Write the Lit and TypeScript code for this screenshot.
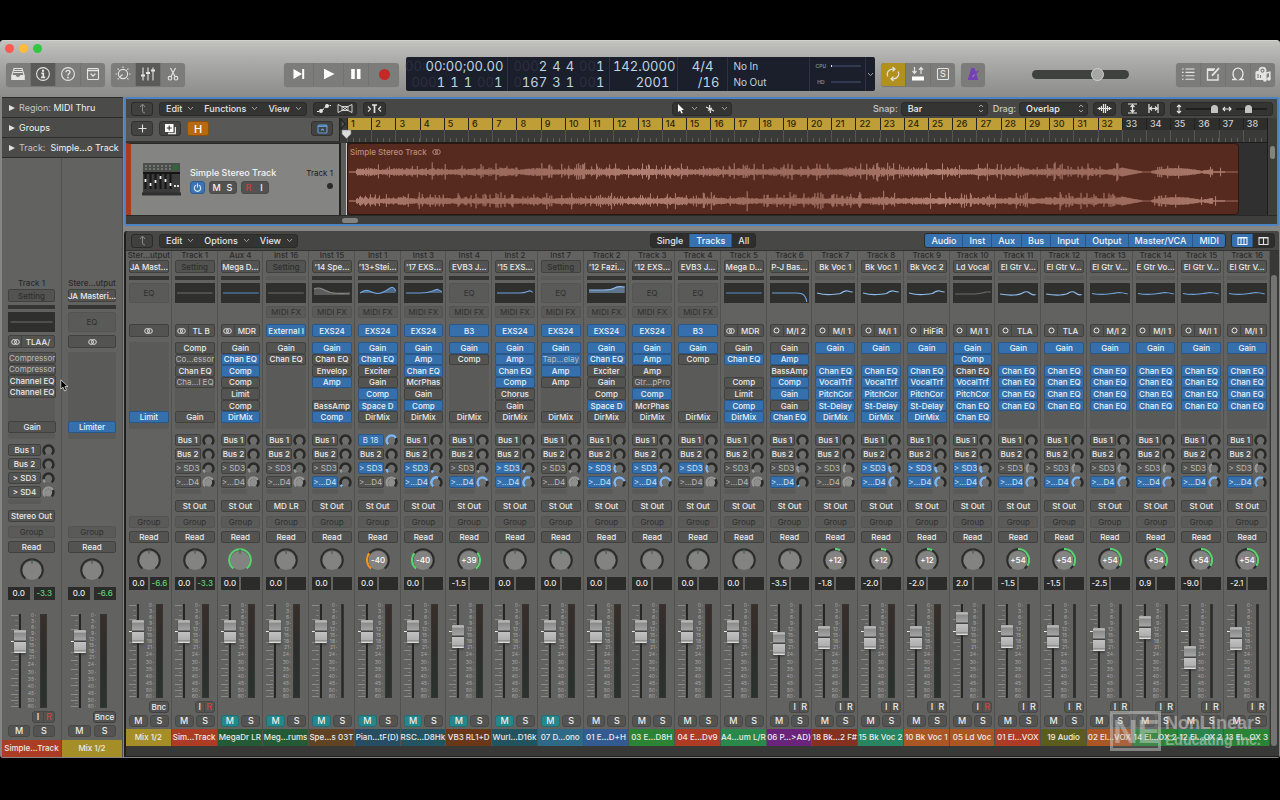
import { LitElement, html, css, svg, nothing } from "lit";
import { customElement, property } from "lit/decorators.js";
import { classMap } from "lit/directives/class-map.js";
import { styleMap } from "lit/directives/style-map.js";

interface Strip {
  top: string;
  set: string;
  bar?: "dark" | "pale";
  eq: string;
  midi?: boolean;
  inst?: string;
  input?: [string, string];
  fx: string[];
  sends?: [string, string, number][];
  out?: string;
  pan?: number;
  panColor?: string;
  vol: string;
  peak?: string;
  fader: number;
  mono?: boolean;
  io?: string;
  mute?: boolean;
  name: string;
  color: string;
}

const base = css`
  * { box-sizing: border-box; }
  button, select, input { margin: 0; padding: 0; border: 0; font: inherit; color: inherit; background: none; border-radius: 0; }
  button { display: flex; align-items: center; justify-content: center; white-space: nowrap; }
  svg { display: block; }
`;

const point = (cx: number, cy: number, r: number, deg: number) => {
  const a = ((deg - 90) * Math.PI) / 180;
  return `${(cx + r * Math.cos(a)).toFixed(2)} ${(cy + r * Math.sin(a)).toFixed(2)}`;
};
const arc = (c: number, r: number, from: number, to: number) =>
  `M${point(c, c, r, from)}A${r} ${r} 0 ${to - from > 180 ? 1 : 0} 1 ${point(c, c, r, to)}`;

const stereoIcon = svg`<svg width="9" height="6" viewBox="0 0 9 6" fill="none" stroke="currentColor" stroke-width="0.9"><circle cx="3.1" cy="3" r="2.4"/><circle cx="5.9" cy="3" r="2.4"/></svg>`;
const monoIcon = svg`<svg width="7" height="7" viewBox="0 0 7 7" fill="none" stroke="currentColor" stroke-width="1"><circle cx="3.5" cy="3.5" r="2.5"/></svg>`;

const curves: Record<string, [string, string, string?]> = {
  flat: ["M2 10H37", "#6f6f6f"],
  blueflat: ["M2 10H37", "#5b8fca"],
  grayhump: ["M2 6Q6 4 10 6T18 9.5Q27 11 37 10", "#8a8a8a", "V12H2Z"],
  wave: ["M2 10Q7 6 11 8T19 10.5Q25 10 30 6T37 8", "#6fa3dc", "V10H2Z"],
  rise: ["M2 10H16Q23 10 28 8T33 6.5Q35 7 37 9", "#6fa3dc", "V10H2Z"],
  bump: ["M2 10H24Q29 10 32 8.5T37 9.5", "#6fa3dc"],
  shelf: ["M2 7H16Q24 7 27 5T37 4", "#8fbcec", "V10H2Z"],
  lowcut: ["M2 10H26Q32 10 34 13T36 19", "#6fa3dc"],
  vox: ["M2 10Q9 12 16 11.5T25 10.5Q29 7 32 8T37 9", "#8fbcec"],
  grayvox: ["M2 11H22Q30 10 32 9H37", "#6c6c6c"],
  gtr: ["M2 11Q10 12.5 16 12T24 10Q28 7.5 31 10T37 11.5", "#8fbcec"],
  gtr2: ["M2 10.5Q10 12 18 11T28 9.5Q32 9.5 37 11", "#6fa3dc"],
};

const scale: [string, number][] = [["0", 1], ["3", 7], ["6", 13], ["9", 19], ["12", 25], ["15", 31], ["18", 37], ["21", 43], ["24", 50], ["30", 58], ["35", 65], ["40", 72], ["45", 79], ["50", 86], ["60", 92]];
const majorTicks = [1, 15, 27, 38, 46, 55, 64, 71, 80, 86, 92];
const minorTicks = [6, 11, 19, 23, 31, 35, 42, 50, 60, 68, 76, 83, 89];

@customElement("channel-strip")
export class ChannelStrip extends LitElement {
  @property({ attribute: false }) strip!: Strip;
  @property({ type: Boolean, reflect: true }) wide = false;

  static styles = [base, css`
    :host { display: flex; flex-direction: column; min-width: 0; background: #626261; border-right: 1px solid #515150; font-size: 8px; line-height: 8px; font-weight: 500; color: #ebebea; }
    .body { padding: 0 2px 0 3px; display: flex; flex-direction: column; }
    :host([wide]) .body { padding: 0 6px; }
    .label { height: 9px; margin: 0 -3px; text-align: center; color: #2b2b2b; white-space: nowrap; }
    :host([wide]) .label { margin-bottom: 1px; }
    .btn { width: 100%; height: 12px; background: #535352; border: 1px solid #414140; border-radius: 2px; }
    .setting { height: 13px; }
    .off { color: #2f2f2f; }
    .pale { background: #5a5a59; border-color: #545453; color: #303030; font-weight: 400; }
    .bar { height: 4px; margin: 3px 0; background: #353534; }
    .bar.light { background: #5a5a59; }
    .eq { height: 20px; background: #2f2f2e; width: 100%; }
    .eqbox { height: 20px; }
    .midi { margin-top: 3px; }
    .gap { height: 15px; }
    :host([wide]) .gap { height: 0; }
    .source { height: 13px; margin: 6px 0 5px; display: flex; overflow: hidden; }
    :host([wide]) .source { margin: 3px 0 4px; }
    .source .icon { width: 13px; flex: none; height: 11px; border-right: 1px solid #434342; }
    .source .only { width: 100%; height: 11px; }
    .source .what { flex: 1; height: 11px; }
    .on { background: #3570ac; border-color: #29578a; color: #eaf2fa; }
    .fx { display: grid; grid-template-rows: repeat(7, minmax(0, 1fr)); height: 87px; padding-bottom: 6px; background: #5a5a59; border-radius: 2px; margin-bottom: 5px; }
    .fx .btn { height: auto; }
    .dim { color: #bcbcbb; font-weight: 400; }
    .sends { display: grid; grid-template-rows: repeat(4, 12px); gap: 2px; height: 54px; }
    .send { display: flex; align-items: center; gap: 1px; }
    .send .btn { flex: 1; min-width: 0; }
    .send .btn.on { color: #d3e3f3; font-weight: 400; }
    .send svg { flex: none; }
    .empty { width: 26px; height: 5px; margin: 1px 0 6px; background: #5a5a59; border-radius: 2px; }
    :host([wide]) .empty { width: 33px; }
    .group { margin: 4px 0 3px; }
    .knob { align-self: center; margin: 5px 0; }
    .knob text { font: 500 8px Inter, sans-serif; fill: #fff; text-anchor: middle; }
    .vals { display: flex; gap: 2px; height: 13px; }
    :host([wide]) .vals { gap: 4px; }
    .vals output { flex: 1 1 0; background: #2b2b2a; text-align: center; line-height: 13px; color: #e8e8e8; }
    .vals .peak { color: #61d276; }
    .fader { display: flex; height: 94px; margin: 14px 0 3px; }
    :host([wide]) .fader { padding-left: 3px; }
    .travel { display: grid; width: 15px; }
    .travel > * { grid-area: 1 / 1; }
    .travel input { -webkit-appearance: none; appearance: none; writing-mode: vertical-lr; direction: rtl; width: 15px; height: 94px; padding-left: 3px; }
    .travel input::-webkit-slider-runnable-track { width: 12px; height: 94px; background: linear-gradient(90deg, transparent 5px, #262626 5px, #262626 7px, transparent 7px); }
    .travel input::-webkit-slider-thumb { -webkit-appearance: none; width: 12px; height: 23px; border-radius: 1px; box-shadow: 0 2px 2px #3338; background: linear-gradient(#a8a8a8 0, #bcbcbc 2px, #8a8a8a 3px, #a4a4a4 10px, #444 11px, #444 12px, #c2c2c2 12px, #aeaeae 20px, #777 21px, #ddd 22px); }
    .scale text { font: 400 5px Inter, sans-serif; fill: #a9a9a8; text-anchor: end; }
    .meter { width: 7px; height: 94px; margin-left: 2px; background: linear-gradient(#3a2e29, #2d2d2a 45%, #2b332e); border: 1px solid #353535; }
    .mono .meter { width: 3px; margin-left: 4px; background: #262b28; }
    :host([wide]) .meter { margin-left: 4px; }
    .io { display: flex; height: 12px; margin-bottom: 2px; justify-content: flex-end; }
    .io .pair { display: flex; border: 1px solid #484847; border-radius: 3px; background: #535352; width: 20px; }
    .io .pair button { flex: 1; font-size: 9px; }
    .io .pair button + button { border-left: 1px solid #454544; }
    .io .bounce { width: 20px; padding: 0 1px; border-radius: 3px; }
    :host([wide]) .io .pair { width: 23px; }
    :host([wide]) .io .bounce { width: 23px; }
    .io .pair .rec { color: #d2423c; }
    .ms { display: flex; gap: 2px; height: 12px; margin-bottom: 2px; }
    :host([wide]) .ms { margin-bottom: 3px; gap: 3px; }
    .ms .btn { border-radius: 3px; border-color: #484847; font-size: 9px; }
    .ms .muted { background: #25878b; border-color: #1f6f73; }
    .name { height: 17px; line-height: 17px; text-align: center; white-space: nowrap; }
    .hidden { visibility: hidden; }
  `];

  private eq(kind: string) {
    if (kind === "none") return html`<button class="btn pale eqbox">EQ</button>`;
    const [d, color, close] = curves[kind];
    return html`<svg class="eq" viewBox="0 0 39 20" preserveAspectRatio="none" role="img" aria-label="EQ curve">
      ${close ? svg`<path d=${d + close} fill=${color} fill-opacity="0.5"/>` : nothing}
      <path d=${d} fill="none" stroke=${color} stroke-width="1.2" /></svg>`;
  }

  private source(s: Strip) {
    if (s.inst) return html`<button class="btn on source">${s.inst}</button>`;
    const [kind, what] = s.input!;
    const icon = kind === "s" ? stereoIcon : monoIcon;
    if (!what) return html`<div class="btn source"><button class="only" aria-label="Format">${icon}</button></div>`;
    return html`<div class="btn source"><button class="icon" aria-label="Format">${icon}</button><button class="what">${what}</button></div>`;
  }

  private sendKnob(mode: string, to: number) {
    const color = mode === "on" ? "#7fb6f2" : "#979797";
    return svg`<svg width="13" height="13" viewBox="0 0 13 13" fill="none" stroke-width="2.6">
      <circle cx="6.5" cy="6.5" r="4" fill=${mode !== "on" && to > 40 ? "#8e8e8d" : "#6e6e6d"}/>
      <path d=${arc(6.5, 5, -140, 140)} stroke="#2a2a29"/>
      ${to > -140 ? svg`<path d=${arc(6.5, 5, -140, to)} stroke=${color}/>` : nothing}</svg>`;
  }

  private panKnob(s: Strip) {
    const p = s.pan ?? 0;
    const full = p === 99;
    const c = s.panColor ?? "#59d36f";
    const lit = p < 0 ? arc(12, 11, -142, -52) : p > 50 ? arc(12, 11, 0, 122) : p > 30 ? arc(12, 11, 48, 142) : arc(12, 11, 0, 28);
    return svg`<svg class="knob" width="24" height="24" viewBox="0 0 24 24" fill="none">
      <circle cx="12" cy="12.5" r="9.6" fill="#838382"/>
      <path d=${arc(12, 10.8, -142, 142)} stroke=${full ? c : "#2c2c2b"} stroke-width="2"/>
      ${p && !full ? svg`<path d=${lit} stroke=${c} stroke-width="2.2"/>`
        : svg`<path d="M12 1V6" stroke="#3a5a40" stroke-width="1"/>`}
      ${p && !full ? svg`<text x="12" y="14.5">${p > 0 ? "+" + p : p}</text>` : nothing}</svg>`;
  }

  render() {
    const s = this.strip;
    return html`
      <div class="body">
        <div class="label">${s.top}</div>
        <button class=${classMap({ btn: true, setting: true, off: s.set === "Setting" })}>${s.set}</button>
        <div class=${classMap({ bar: true, light: s.bar === "pale" })}></div>
        ${this.eq(s.eq)}
        ${s.midi ? html`<button class="btn pale midi">MIDI FX</button>` : html`<div class="gap"></div>`}
        ${this.source(s)}
        <div class="fx">${s.fx.map((f) => f
          ? html`<button class=${classMap({ btn: true, on: f.includes("*"), dim: f.includes("~") })}>${f.replace(/[*~]/g, "")}</button>`
          : html`<span></span>`)}</div>
        <div class="sends">${(s.sends ?? []).map(([t, m, to]) => html`<div class="send">
          <button class=${classMap({ btn: true, on: m === "on", dim: m === "dim" })}>${t}</button>${this.sendKnob(m, to)}</div>`)}</div>
        <div class=${classMap({ empty: true, hidden: !s.sends })}></div>
        ${s.out ? html`<button class="btn">${s.out}</button>` : html`<button class="btn hidden" disabled></button>`}
        <button class="btn pale group">Group</button>
        <button class="btn">Read</button>
        ${this.panKnob(s)}
        <div class="vals"><output>${s.vol}</output><output class="peak">${s.peak ?? ""}</output></div>
        <div class=${classMap({ fader: true, mono: !!s.mono })}>
          <div class="travel">
            <svg width="8" height="94" viewBox="0 0 8 94" stroke-width="1">
              ${majorTicks.map((y) => svg`<path d="M0 ${y + 0.5}H7" stroke=${y === 27 ? "#f0f0f0" : "#8a8a89"}/>`)}
              ${minorTicks.map((y) => svg`<path d="M4 ${y + 0.5}H7" stroke="#7c7c7b"/>`)}
            </svg>
            <input type="range" min="0" max="71" .value=${String(55 - s.fader)} aria-label="Volume ${s.name}" />
          </div>
          <svg class="scale" width="10" height="94" viewBox="0 0 10 94" overflow="visible">
            ${scale.map(([t, y]) => svg`<text x="8" y=${y + 2}>${t}</text><path d="M9 ${y + 0.5}H10" stroke="#8c8c8b" stroke-width="0.7"/>`)}
          </svg>
          <div class="meter"></div>
        </div>
        <div class="io">${!s.io ? nothing : s.io.startsWith("B")
          ? html`<button class="btn bounce">${s.io}</button>`
          : html`<div class="pair"><button>I</button><button class=${classMap({ rec: s.io === "IR!" })}>R</button></div>`}</div>
        <div class="ms"><button class=${classMap({ btn: true, muted: !!s.mute })}>M</button><button class="btn">S</button></div>
      </div>
      <div class="name" style=${styleMap({ background: s.color })}>${s.name}</div>`;
  }
}

const N = -140;
const sends = (a: string, at: number, b: string, bt: number): [string, string, number][] => [
  ["Bus 1", "", N], ["Bus 2", "", N], ["> SD3", a, at], [">…D4", b, bt],
];
const d = "dim", o = "on";

const inspectorStrips: Strip[] = [
  { top: "Track 1", set: "Setting", eq: "flat", input: ["s", "TLAA/"], fx: ["~Compressor", "~Compressor", "Channel EQ", "Channel EQ", "", "", "Gain"], sends: [["Bus 1", "", N], ["Bus 2", "", N], ["> SD3", "", -100], ["> SD4", "", 60]], out: "Stereo Out", vol: "0.0", peak: "-3.3", fader: 0, io: "IR!", name: "Simple…Track", color: "#ac3c23" },
  { top: "Stere…utput", set: "JA Masteri…", eq: "none", input: ["s", ""], fx: ["", "", "", "", "", "", "*Limiter"], vol: "0.0", peak: "-6.6", fader: 0, io: "Bnce", name: "Mix 1/2", color: "#a58e28" },
];

const voc = ["*Gain", "", "*Chan EQ", "*VocalTrf", "*PitchCor", "*St-Delay", "*DirMix"];
const gtr = ["*Gain", "", "*Chan EQ", "*Chan EQ", "*Chan EQ", "*Chan EQ", ""];
const guitar = (n: number, set: string, eq: string, src: string, vol: string, fader: number, name: string, color: string): Strip => ({
  top: `Track ${n}`, set, bar: "pale", eq, input: ["m", src], fx: gtr, sends: sends(d, -30, o, 30), out: "St Out", pan: 54, vol, fader, mono: true, io: "IR", name, color,
});

const strips: Strip[] = [
  { top: "Ster…utput", set: "JA Mast…", eq: "none", input: ["s", ""], fx: ["", "", "", "", "", "", "*Limit"], vol: "0.0", peak: "-6.6", fader: 0, io: "Bnc", name: "Mix 1/2", color: "#a58e28" },
  { top: "Track 1", set: "Setting", eq: "flat", input: ["s", "TL B"], fx: ["Comp", "~Co…essor", "Chan EQ", "~Cha…l EQ", "", "", "Gain"], sends: sends(d, -100, d, 60), out: "St Out", vol: "0.0", peak: "-3.3", fader: 0, io: "IR!", name: "Sim…Track", color: "#ac3c23" },
  { top: "Aux 4", set: "Mega D…", eq: "blueflat", input: ["s", "MDR"], fx: ["Gain", "*Chan EQ", "*Comp", "Comp", "Limit", "Comp", "*DirMix"], sends: sends(d, -90, d, 60), out: "St Out", pan: 99, vol: "0.0", fader: 0, mute: true, name: "MegaDr LR", color: "#245a36" },
  { top: "Inst 16", set: "Setting", bar: "pale", eq: "flat", midi: true, inst: "External I", fx: ["Gain", "Chan EQ", "", "", "", "", ""], sends: sends(d, -100, d, 60), out: "MD LR", vol: "0.0", fader: 0, mute: true, name: "Meg…rums", color: "#245a36" },
  { top: "Inst 15", set: "’14 Spe…", eq: "grayhump", midi: true, inst: "EXS24", fx: ["*Gain", "Chan EQ", "Envelop", "*Amp", "", "BassAmp", "*Comp"], sends: sends(d, -100, o, -115), out: "St Out", vol: "0.0", fader: 0, mono: true, mute: true, name: "Spe…s 03T", color: "#5f4322" },
  { top: "Inst 1", set: "’13+Stei…", eq: "wave", midi: true, inst: "EXS24", fx: ["*Gain", "*Chan EQ", "Exciter", "Gain", "*Comp", "*Space D", "DirMix"], sends: [["B 18", o, 60], ["Bus 2", "", N], ["> SD3", o, -95], [">…D4", d, 50]], out: "St Out", pan: -40, panColor: "#f39325", vol: "0.0", fader: 0, mute: true, name: "Pian…tF(D)", color: "#264d62" },
  { top: "Inst 3", set: "’17 EXS…", eq: "rise", midi: true, inst: "EXS24", fx: ["*Gain", "*Amp", "*Chan EQ", "McrPhas", "Gain", "*Comp", "DirMix"], sends: sends(o, -110, o, 20), out: "St Out", pan: -40, vol: "0.0", fader: 0, mute: true, name: "RSC…D8Hk", color: "#245362" },
  { top: "Inst 4", set: "EVB3 J…", eq: "none", midi: true, inst: "B3", fx: ["*Gain", "Comp", "", "", "", "", "DirMix"], sends: sends(d, -110, o, 70), out: "St Out", pan: 39, vol: "-1.5", fader: 5, mute: true, name: "VB3 RL1+D", color: "#6a3719" },
  { top: "Inst 2", set: "’15 EXS…", eq: "bump", midi: true, inst: "EXS24", fx: ["*Gain", "*Amp", "*Chan EQ", "*Comp", "Chorus", "Gain", "DirMix"], sends: sends(o, -105, o, 20), out: "St Out", vol: "0.0", fader: 0, mute: true, name: "Wurl…D16k", color: "#245360" },
  { top: "Inst 7", set: "Setting", bar: "pale", eq: "none", midi: true, inst: "EXS24", fx: ["*Gain", "*~Tap…elay", "*Amp", "Amp", "", "", "DirMix"], sends: sends(d, -110, d, 60), out: "St Out", vol: "0.0", fader: 0, mute: true, name: "07 D…ono", color: "#2e6987" },
  { top: "Track 2", set: "’12 Fazi…", eq: "shelf", midi: true, inst: "EXS24", fx: ["*Gain", "*Chan EQ", "Exciter", "Gain", "Comp", "*Space D", "DirMix"], sends: sends(o, -50, o, 75), out: "St Out", vol: "0.0", fader: 0, name: "01 E…D+H", color: "#345b91" },
  { top: "Track 3", set: "’12 EXS…", eq: "none", midi: true, inst: "EXS24", fx: ["*Gain", "*Amp", "Amp", "~Gtr…pPro", "*Comp", "McrPhas", "DirMix"], sends: sends(o, -95, o, 75), out: "St Out", vol: "0.0", fader: 0, name: "03 E…D8H", color: "#2b8434" },
  { top: "Track 4", set: "EVB3 J…", eq: "none", midi: true, inst: "B3", fx: ["*Gain", "Comp", "", "", "", "", "DirMix"], sends: sends(o, -50, d, 50), out: "St Out", vol: "0.0", fader: 0, name: "04 E…Dv9", color: "#ac3c23" },
  { top: "Track 5", set: "Mega D…", eq: "blueflat", input: ["s", "MDR"], fx: ["Gain", "*Chan EQ", "", "Comp", "Limit", "*Comp", "*DirMix"], sends: sends(d, -100, d, 60), out: "St Out", vol: "0.0", fader: 0, name: "A4…um L/R", color: "#2a884a" },
  { top: "Track 6", set: "P-J Bas…", eq: "lowcut", input: ["m", "M/I 2"], fx: ["Gain", "*Amp", "BassAmp", "*Comp", "*Gain", "Gain", "*Chan EQ"], sends: sends(d, -60, o, -120), out: "St Out", vol: "-3.5", fader: 12, mono: true, io: "IR", name: "06 P…>AD)", color: "#6b247c" },
  { top: "Track 7", set: "Bk Voc 1", bar: "pale", eq: "vox", input: ["m", "M/I 1"], fx: voc, sends: sends(d, -30, d, 60), out: "St Out", pan: 12, vol: "-1.8", fader: 6, io: "IR", name: "18 Bk…2 F#", color: "#84311f" },
  { top: "Track 8", set: "Bk Voc 1", bar: "pale", eq: "vox", input: ["m", "M/I 1"], fx: voc, sends: sends(o, -60, o, 0), out: "St Out", pan: 12, vol: "-2.0", fader: 6, io: "IR", name: "15 Bk Voc 2", color: "#298461" },
  { top: "Track 9", set: "Bk Voc 2", bar: "pale", eq: "vox", input: ["m", "HiFiR"], fx: voc, sends: sends(o, -70, o, 0), out: "St Out", pan: 12, vol: "-2.0", fader: 6, io: "IR", name: "10 Bk Voc 1", color: "#aa5725" },
  { top: "Track 10", set: "Ld Vocal", eq: "grayvox", input: ["m", "M/I 1"], fx: ["*Gain", "*Comp", "Chan EQ", "*VocalTrf", "*PitchCor", "*Chan EQ", "*Chan EQ"], sends: sends(o, -60, o, 10), out: "St Out", vol: "2.0", fader: -8, mono: true, io: "IR!", name: "05 Ld Voc", color: "#aa5725" },
  guitar(11, "El Gtr V…", "gtr", "TLA", "-1.5", 5, "01 El…VOX", "#ac3c23"),
  guitar(12, "El Gtr V…", "gtr", "TLA", "-1.5", 5, "19 Audio", "#5b5d1e"),
  guitar(13, "El Gtr V…", "gtr2", "M/I 2", "-2.5", 8, "02 El…VOX", "#aa5725"),
  guitar(14, "E Gtr Vo…", "gtr2", "M/I 1", "0.9", -4, "14 El…OX 2", "#2b8434"),
  guitar(15, "El Gtr V…", "gtr2", "M/I 1", "-9.0", 26, "12 El…OX 2", "#2a8450"),
  guitar(16, "El Gtr V…", "gtr2", "M/I 1", "-2.1", 7, "13 El…OX 3", "#2b8434"),
];

function waveform(mid: number, seed: number) {
  let r = seed;
  const rnd = () => ((r = (r * 1103515245 + 12345) % 2147483648) / 2147483648);
  let p = "";
  for (let x = 1; x < 893; x++) {
    let up: number;
    let down: number;
    if (x < 776) {
      const body = 1.8 + 1.9 * Math.abs(Math.sin(x / 11)) * rnd() + rnd();
      const hit = rnd() < 0.15 ? 1.5 + rnd() * 4.5 : 0;
      up = body + hit;
      down = body + hit * (0.5 + rnd() * 0.6);
      if (x < 8) up = down = 0.6;
    } else if (x < 797) up = down = 4.2 * (1 - (x - 776) / 23) + rnd() * 0.4;
    else if (x < 806) up = down = 0.4;
    else if (x < 868) { up = 1 + 2.6 * Math.abs(Math.sin((x - 806) / 16)) + (rnd() < 0.08 ? 3 : rnd() * 0.5); down = up; }
    else if (x < 880) up = down = rnd() < 0.3 ? 4 + rnd() * 2 : 0.8;
    else up = down = 0.4;
    p += `M${x + 0.5} ${(mid - up).toFixed(1)}V${(mid + down).toFixed(1)}`;
  }
  return p;
}
const waves = waveform(28, 41) + waveform(57, 977);

const chev = svg`<svg width="7" height="5" viewBox="0 0 7 5" fill="none" stroke="#a0a0a0" stroke-width="1"><path d="M1 1L3.5 3.7L6 1"/></svg>`;
const backIcon = svg`<svg width="9" height="11" viewBox="0 0 9 11" fill="none" stroke="#8b8b8a" stroke-width="1"><path d="M2 4L4.5 1L7 4M4.5 1.5V8Q4.5 10 7 10"/></svg>`;
const updown = svg`<svg width="6" height="9" viewBox="0 0 6 9" fill="none" stroke="#a5a5a4" stroke-width="1"><path d="M1 3L3 1L5 3M1 6L3 8L5 6"/></svg>`;
const icon = (body: unknown, w = 16, h = 16) => svg`<svg width=${w} height=${h} viewBox="0 0 ${w} ${h}" fill="none" stroke="currentColor" stroke-width="1.1">${body}</svg>`;

const iLibrary = icon(svg`<path d="M4 2.5H12L14 9V13.5H2V9Z"/><path d="M2 9.5H5.2Q5.8 11.5 8 11.5T10.8 9.5H14V13.5H2Z" fill="currentColor"/><path d="M4 4.5H12M3.4 6.5H12.6"/>`);
const iInfo = icon(svg`<circle cx="8" cy="8" r="6.4"/><circle cx="8" cy="4.8" r="1.2" fill="currentColor" stroke="none"/><path d="M6.3 7.3H8.3V11.2M6 11.4H10.2" stroke-width="1.7"/>`);
const iHelp = icon(svg`<circle cx="8" cy="8" r="6.4"/><path d="M5.9 6.3Q6 4.4 8 4.4T10 6.2Q10 7.3 8.7 7.9Q8 8.3 8 9.6" stroke-width="1.3"/><circle cx="8" cy="11.5" r=".9" fill="currentColor" stroke="none"/>`);
const iTray = icon(svg`<rect x="2.5" y="2.5" width="11" height="11" rx="1"/><path d="M2.5 4.5H13.5" stroke-width="1.6"/><path d="M5.6 7.6L8 10L10.4 7.6" stroke-width="1.3"/>`);
const iSmart = icon(svg`<circle cx="8" cy="8" r="4.6"/><path d="M7.5 8.5L4.8 11.2M8 0.5V2M0.5 8H2M14 8H15.5M2.6 2.6L3.7 3.7M13.4 2.6L12.3 3.7M2.6 13.4L3.7 12.3M13.4 13.4L12.3 12.3"/>`);
const iMixer = icon(svg`<path d="M3 1.5V14.5M8 1.5V14.5M13 1.5V14.5"/><path d="M1 9.5H5M6 7H10M11 4.5H15" stroke-width="2"/>`);
const iScissors = icon(svg`<path d="M5.5 2L10 10.5M10.5 2L6 10.5"/><circle cx="5" cy="12.2" r="1.8"/><circle cx="11" cy="12.2" r="1.8"/>`);
const iEnd = icon(svg`<path d="M2.5 3L11 8L2.5 13Z" fill="currentColor" stroke="none"/><path d="M12.2 3V13" stroke-width="2"/>`);
const iPlay = icon(svg`<path d="M3 2.8L13.5 8L3 13.2Z" fill="currentColor" stroke="none"/>`);
const iPause = icon(svg`<path d="M5 3V13M10.7 3V13" stroke-width="3.6"/>`);
const iCycle = icon(svg`<path d="M2.8 10.5A5.4 5 0 0 1 7.5 3.2H9M13.2 5.5A5.4 5 0 0 1 8.5 12.8H7M7.5 1L10 3.2L7.5 5.4M8.5 10.6L6 12.8L8.5 15" stroke-width="1.2"/>`);
const iReplace = icon(svg`<path d="M4.5 1V7M2.5 5L4.5 7.3L6.5 5M11 8V2M9 3.8L11 1.5L13 3.8" stroke-width="1.2"/><rect x="2" y="10.5" width="12" height="4" fill="#fff" stroke="none"/>`);
const iSolo = icon(svg`<rect x="2.5" y="2.5" width="11" height="11" rx="1"/><text x="8" y="11.2" text-anchor="middle" font-size="9" font-weight="500" font-family="Inter, sans-serif" fill="currentColor" stroke="none">S</text>`);
const iMetro = icon(svg`<path d="M6.8 2.5H9.2L12.5 13.5H3.5Z" fill="#7442b4" stroke="#7442b4"/><path d="M7.5 11L12 6" stroke="#a99ab8" stroke-width="1"/><path d="M9.5 8.5L13.5 4.5" stroke="#7442b4" stroke-width="1.3"/>`);
const iList = icon(svg`<path d="M5.5 3H14.5M5.5 6.4H14.5M5.5 9.8H14.5M5.5 13.2H14.5M2 3H3.6M2 6.4H3.6M2 9.8H3.6M2 13.2H3.6"/>`);
const iNote = icon(svg`<path d="M13 8V14H2.5V3H10" stroke-width="1.4"/><path d="M2.5 4H9" stroke-width="2"/><path d="M7 9.6L14 2.2" stroke-width="1.9"/>`);
const iLoop = icon(svg`<path d="M2 13.5H6C4 12 3 10 3 7.5A5 5.3 0 0 1 13 7.5C13 10 12 12 10 13.5H14" stroke-width="1.3"/>`);
const iMedia = icon(svg`<rect x="1" y="5.5" width="8.5" height="8" rx="1" fill="currentColor"/><circle cx="7.5" cy="4.6" r="3.4" fill="currentColor"/><circle cx="7.5" cy="4.6" r="1.5" stroke="#7c7c7b" fill="none"/><path d="M3 8V12M5.5 9V12" stroke="#7c7c7b"/><path d="M10.8 14V7.2L14.8 6.2V12.5" stroke-width="1.6"/><circle cx="9.9" cy="13.8" r="1.3" fill="currentColor"/><circle cx="13.9" cy="12.8" r="1.3" fill="currentColor"/>`);

@customElement("app-root")
export class AppRoot extends LitElement {
  static styles = [base, css`
    :host { display: flex; flex-direction: column; min-height: 100vh; padding: 40px 0 42px; box-sizing: border-box; background: #000; font-family: Inter, "Open Sans", sans-serif; font-size: 9px; color: #e4e4e3; overflow: hidden; }
    .window { flex: 1; display: flex; flex-direction: column; background: #868685; border-radius: 4px 4px 3px 3px; position: relative; }
    .chrome { height: 57px; background: linear-gradient(#c2c2bf, #aeaeac 30%, #8b8b8a); border-radius: 4px 4px 0 0; border-top: 1px solid #cfd3cf; }
    .lights { display: flex; gap: 5px; padding: 3px 5px 0; height: 16px; }
    .light { width: 9px; height: 9px; border-radius: 5px; }
    .red { background: #fb5a53; } .amber { background: #fbbb3b; } .green { background: #31c740; }
    .bar { display: flex; align-items: center; height: 34px; padding: 0 5px 0 6px; }
    .set { display: flex; height: 23px; border-radius: 3px; background: #7c7c7b; box-shadow: 0 1px 1px #0003; color: #e4e4e3; overflow: hidden; margin-right: 6px; }
    .set button { width: 25px; border-right: 1px solid #727271; }
    .set button:last-child { border-right: 0; width: 24px; }
    .set .act { background: #5a5a59; }
    .set .yel { background: #b0911d; }
    .set.transport { color: #fff; margin-right: 7px; }
    .set.transport .broad { width: 30px; }
    .disc { width: 11px; height: 11px; border-radius: 6px; background: #c02a27; }
    .sp1 { flex: 97; } .sp2 { flex: 42; } .sp3 { flex: 49; }
    .set.last { margin-right: 0; }
    .lcd { display: flex; height: 34px; background: #1b1e2b; border-radius: 2px; color: #bdd5e1; font-size: 13px; line-height: 16px; font-weight: 400; font-variant-numeric: tabular-nums; margin-right: 6px; }
    .lcd > * { border-right: 1px solid #2e3244; padding: 1px 2px; }
    .lcd > :last-child { border-right: 0; }
    .ghost { color: #2b2f3e; }
    .pos { width: 102px; } .tempo { width: 68px; text-align: right; } .sig { width: 50px; text-align: right; }
    .line { display: flex; justify-content: space-between; white-space: nowrap; }
    .line.fit { justify-content: flex-end; padding-right: 2px; }
    .line.inset { padding: 0 3px; }
    .in2 { padding-right: 6px; } .in3 { padding-right: 12px; } .sig .in2 { padding-right: 6px; }
    .lcd .ports { width: 82px; padding-left: 5px; font-size: 10px; }
    .lcd .load { width: 56px; font-size: 5px; color: #7790a5; font-weight: 600; padding: 1px 4px; }
    .lrow { display: flex; align-items: center; height: 16px; gap: 4px; }
    .lrow span { width: 13px; text-align: center; }
    .lrow i { flex: 1; height: 2px; background: #303a50; border-left: 1px solid #303a50; }
    .lrow .lit { border-left-color: #dfe9ee; }
    .lcd .more { width: 9px; padding: 0 1px; }
    .master { -webkit-appearance: none; appearance: none; width: 97px; height: 13px; }
    .master::-webkit-slider-runnable-track { height: 9px; border-radius: 5px; background: #3e413d; }
    .master::-webkit-slider-thumb { -webkit-appearance: none; width: 13px; height: 13px; margin-top: -2px; border-radius: 7px; background: #a6a6a5; border: 1px solid #d0d0cf; }

    .work { flex: 1; display: grid; grid-template-columns: 121px minmax(0, 1fr); gap: 1px; padding: 0 1px 1px 2px; }
    .inspector { display: flex; flex-direction: column; background: #616160; border-top: 1px solid #2b2b2b; }
    .fold { height: 20px; border-bottom: 1px solid #2c2c2b; background: #4b4b4a; justify-content: flex-start; gap: 4px; padding-left: 7px; color: #c4c4c3; width: 100%; font-weight: 400; }
    .fold b { font-weight: 400; color: #f2f2f1; }
    .fold i { border: 3px solid transparent; border-left: 6px solid #e2e2e1; border-right: 0; }
    .pair { flex: 1; display: grid; grid-template-columns: 60px minmax(0, 1fr); }
    .pair channel-strip { justify-content: flex-end; }

    .main { display: flex; flex-direction: column; gap: 5px; min-width: 0; }
    .tracks { border: 2px solid #4c83c3; border-radius: 2px; background: #383837; display: flex; flex-direction: column; }
    .tools { display: grid; grid-template-columns: minmax(0, 1fr) auto minmax(0, 1fr); align-items: center; height: 19px; background: #474746; padding: 0 4px 0 5px; font-weight: 500; }
    .side { display: flex; align-items: center; gap: 6px; }
    .side.end { justify-content: flex-end; gap: 5px; }
    .grp { display: flex; height: 14px; background: #343433; border: 1px solid #2b2b2a; border-radius: 3px; overflow: hidden; }
    .grp button { padding: 0 4px 0 6px; gap: 5px; }
    .grp .ic { width: 21px; padding: 0; gap: 3px; }
    .grp.back { width: 22px; background: #40403f; }
    .grp .wideic { width: 29px; padding: 0; gap: 6px; }
    .push { flex: 1; }
    .field { display: flex; align-items: center; gap: 3px; color: #c8c8c7; }
    .pick { display: flex; align-items: center; height: 14px; background: #343433; border: 1px solid #2b2b2a; border-radius: 3px; padding-right: 3px; color: #f0f0ef; }
    .pick select { -webkit-appearance: none; appearance: none; padding: 0 6px; outline: none; }
    .snap select { width: 76px; } .drag select { width: 58px; }
    .zoom { display: flex; align-items: center; gap: 4px; width: 103px; padding: 0 5px; }
    .zoom input { -webkit-appearance: none; appearance: none; min-width: 0; height: 10px; }
    .zoom .zv { width: 32px; } .zoom .zh { width: 31px; }
    .zoom input::-webkit-slider-runnable-track { height: 8px; background: linear-gradient(transparent 3px, #1f1f1f 3px, #1f1f1f 5px, transparent 5px); }
    .zoom input::-webkit-slider-thumb { -webkit-appearance: none; width: 7px; height: 8px; border-radius: 4px 4px 1px 1px; background: #c4c4c3; }
    .field2 { display: grid; grid-template-columns: 214px 7px minmax(0, 1fr) 9px; grid-template-rows: 25px 72px 9px; }
    .head { display: flex; align-items: center; gap: 6px; padding: 0 6px 2px 5px; background: #585857; border-bottom: 2px solid #343433; border-right: 1px solid #222; }
    .head button { width: 22px; height: 15px; background: #434342; border: 1px solid #333; border-radius: 3px; font-size: 11px; }
    .head .hide { background: #b8690f; border-color: #8b520f; color: #fff; font-weight: 500; }
    .arrow { display: flex; align-items: flex-start; background: #3a3a39; }
    .ruler { display: grid; grid-template-columns: repeat(38, minmax(0, 1fr)); border-right: 1px solid #1d1d1c; border-bottom: 1px solid #1d1d1c; }
    .meas { display: flex; flex-direction: column; font-size: 9px; line-height: 12px; font-weight: 500; color: #cfcfce; }
    .meas b { font-weight: 500; height: 12px; padding-left: 3px; border-left: 1px solid #222; background: #2e2e2d; }
    .meas.cyc b { background: #bf9d37; color: #2d2408; }
    .meas i { flex: 1; border-left: 1px solid #555; background: linear-gradient(#3a3a39 8px, transparent 8px), repeating-linear-gradient(90deg, #3a3a39 0 5px, #5d5d5c 5px 6px); }
    .rail { background: #3d3d3c; }
    .thead { display: flex; background: #848483; border-left: 5px solid #aa3b21; border-top: 1px solid #2a2a29; border-right: 1px solid #222; }
    .picicon { margin: 19px 9px 0 11px; }
    .tinfo { flex: 1; padding-top: 24px; color: #f4f4f3; font-weight: 500; line-height: 10px; }
    .tbtns { display: flex; gap: 4px; margin-top: 3px; font-size: 9px; line-height: 9px; }
    .tbtns .two { display: flex; height: 13px; border: 1px solid #4a4a49; background: #525251; border-radius: 3px; }
    .tbtns .two button { width: 13px; }
    .tbtns .pow { width: 15px; height: 13px; background: #3a74b4; border: 1px solid #2d5c90; border-radius: 3px; }
    .two .red-t { color: #cc3e38; }
    .tno { padding: 24px 6px 0 0; font-size: 8px; line-height: 10px; color: #1c1c1c; text-align: right; }
    .tno i { display: block; width: 6px; height: 6px; margin: 5px 0 0 auto; border-radius: 3px; background: #2b2b2a; }
    .playhead { background: #5d5d5c; border-left: 1px solid #222; border-right: 1px solid #ccc; }
    .arrange { background: #303030; border-right: 1px solid #1d1d1c; overflow: hidden; }
    .region { height: 72px; background: #572a1f; border: 1px solid #2c1711; border-radius: 4px; color: #b98b7e; font-size: 8px; font-weight: 500; display: grid; }
    .region > * { grid-area: 1 / 1; }
    .region span { padding: 3px 2px 0; display: flex; gap: 5px; align-items: center; height: 12px; }
    .region svg.wv { width: 100%; height: 70px; }
    .vbar { padding: 3px 2px; background: #3d3d3c; }
    .vbar i { display: block; height: 13px; border-radius: 3px; background: #838382; }
    .hbar { grid-column: 1 / -1; background: #3e3e3d; border-top: 1px solid #2a2a29; padding: 2px 0 0 216px; }
    .hbar i { display: block; width: 16px; height: 5px; border-radius: 3px; background: #838382; }

    .mixer { flex: 1; display: flex; flex-direction: column; background: #383837; border: solid #1e1e1d; border-width: 0 0 1px 2px; border-radius: 3px 3px 0 0; }
    .mixer .tools { height: 20px; flex: none; border-bottom: 1px solid #333; border-radius: 3px 3px 0 0; }
    .tabs { display: flex; height: 15px; background: #2e2e2d; border: 1px solid #2b2b2a; border-radius: 3px; overflow: hidden; }
    .tabs button { padding: 0 6px; border-right: 1px solid #2a5788; }
    .tabs button:last-child { border-right: 0; }
    .tabs .sel, .tabs.filters { background: #3871b0; color: #eff5fb; }
    .view button { width: 21px; padding: 0; }
    .board { display: grid; grid-template-columns: minmax(0, 1fr) 9px; }
    .strips { display: grid; grid-template-columns: repeat(25, minmax(0, 1fr)); }
    .mscroll { padding: 24px 2px 0 1px; display: flex; }
    .mscroll i { flex: 1; border-radius: 3px; background: #747473; }

    .mark { position: absolute; right: 15px; bottom: 7px; display: flex; gap: 4px; align-items: center; opacity: .5; color: #d8d8d8; pointer-events: none; }
    .mark .logo { width: 51px; height: 40px; border: 3px solid #cfcfcf; background: #9996; font: 700 34px/34px "Liberation Sans", sans-serif; text-align: center; }
    .mark .word { font: 700 18px/18px "Liberation Sans", sans-serif; width: 100px; }
    .mark .word small { font-size: 14px; line-height: 17px; display: block; white-space: nowrap; }
    .pointer { position: absolute; left: 60px; top: 339px; }
    .thumb { position: absolute; left: 341px; top: 89px; }
  `];

  render() {
    const menu = (t: string) => html`<button>${t}${chev}</button>`;
    return html`
    <div class="window">
      <header class="chrome">
        <div class="lights"><span class="light red"></span><span class="light amber"></span><span class="light green"></span></div>
        <div class="bar">
          <div class="set"><button aria-label="Library">${iLibrary}</button><button class="act" aria-label="Inspector">${iInfo}</button><button aria-label="Quick Help">${iHelp}</button><button aria-label="Toolbar">${iTray}</button></div>
          <div class="set"><button aria-label="Smart Controls">${iSmart}</button><button class="act" aria-label="Mixer">${iMixer}</button><button aria-label="Editors">${iScissors}</button></div>
          <div class="sp1"></div>
          <div class="set transport"><button class="broad" aria-label="Go to End">${iEnd}</button><button class="broad" aria-label="Play">${iPlay}</button><button aria-label="Pause">${iPause}</button><button class="broad" aria-label="Record"><span class="disc"></span></button></div>
          <div class="lcd">
            <div class="pos"><div class="line fit"><span class="ghost">00:</span><span>00:00;00.00</span></div>
              <div class="line inset"><span><span class="ghost">000</span>1</span><span>1</span><span>1</span><span><span class="ghost">00</span>1</span></div></div>
            <div class="pos"><div class="line inset"><span><span class="ghost">000</span>2</span><span>4</span><span>4</span><span><span class="ghost">00</span>1</span></div>
              <div class="line inset"><span><span class="ghost">0</span>167</span><span>3</span><span>1</span><span><span class="ghost">00</span>1</span></div></div>
            <div class="tempo"><div>142.0000</div><div class="in2">2001</div></div>
            <div class="sig"><div class="in3">4/4</div><div class="in2">/16</div></div>
            <div class="ports"><div>No In</div><div>No Out</div></div>
            <div class="load"><div class="lrow"><span>CPU</span><i class="lit"></i></div><div class="lrow"><span>HD</span><i></i></div></div>
            <button class="more" aria-label="Display mode">${chev}</button>
          </div>
          <div class="set"><button class="yel" aria-label="Cycle">${iCycle}</button><button aria-label="Replace">${iReplace}</button><button aria-label="Solo">${iSolo}</button></div>
          <div class="set"><button aria-label="Metronome">${iMetro}</button></div>
          <div class="sp2"></div>
          <input class="master" type="range" min="0" max="100" value="71" aria-label="Master volume" />
          <div class="sp3"></div>
          <div class="set last"><button aria-label="Lists">${iList}</button><button aria-label="Notes">${iNote}</button><button aria-label="Loops">${iLoop}</button><button aria-label="Media">${iMedia}</button></div>
        </div>
      </header>
      <div class="work">
        <aside class="inspector">
          <button class="fold"><i></i><span>Region: <b>MIDI Thru</b></span></button>
          <button class="fold"><i></i><b>Groups</b></button>
          <button class="fold"><i></i><span>Track:&nbsp; <b>Simple…o Track</b></span></button>
          <div class="pair">${inspectorStrips.map((s) => html`<channel-strip wide .strip=${s}></channel-strip>`)}</div>
        </aside>
        <main class="main">
          <section class="tracks">
            <div class="tools">
              <div class="side">
                <div class="grp back"><button class="ic" aria-label="Back">${backIcon}</button></div>
                <div class="grp">${menu("Edit")}${menu("Functions")}${menu("View")}</div>
                <div class="grp"><button class="ic" aria-label="Automation">${icon(svg`<path d="M1 8.5H5L11 2.5H15" stroke-dasharray="2 1"/><circle cx="5" cy="8" r="1.4" fill="currentColor"/><circle cx="11" cy="3" r="1.4" fill="currentColor"/>`, 16, 11)}</button><button class="ic" aria-label="Flex">${icon(svg`<path d="M1 1.5V9.5L5 7.5H11L15 9.5V1.5L11 3.5H5ZM5 3.5V7.5M11 3.5V7.5M5 3.5L11 7.5M11 3.5L5 7.5" stroke-width=".9"/>`, 16, 11)}</button></div>
                <div class="grp"><button class="ic" aria-label="Catch">${icon(svg`<path d="M1 3.5L3.5 6L1 8.5M14 3.5L11.5 6L14 8.5"/><path d="M5 2H10M7.5 2V10" stroke-width="1.7"/>`, 15, 11)}</button></div>
              </div>
              <div class="grp"><button class="wideic" aria-label="Pointer tool"><svg width="8" height="10" viewBox="0 0 8 10"><path d="M1 0V8L3 6.4L4.4 9.6L5.8 9L4.4 6H7Z" fill="#fff"/></svg>${chev}</button><button class="wideic" aria-label="Scissors tool">${icon(svg`<path d="M4.5 1L5.5 9M1 3L9 7M3 6.5L7 4" stroke-width="1.2"/>`, 10, 10)}${chev}</button></div>
              <div class="side end">
                <label class="field">Snap:<span class="pick snap"><select><option>Bar</option></select>${updown}</span></label>
                <label class="field">Drag:<span class="pick drag"><select><option>Overlap</option></select>${updown}</span></label>
                <div class="grp"><button class="ic" aria-label="Waveform zoom">${icon(svg`<path d="M0.5 5.5H14.5M2.5 4V7M4.5 3V8M6.5 1V10M8.5 1V10M10.5 3V8M12.5 4V7" stroke-width="1.2"/>`, 15, 11)}</button></div>
                <div class="grp"><button class="ic" aria-label="Zoom vertical">${icon(svg`<path d="M1 1H10M1 10H10M5.5 2V9M3.5 4L5.5 2L7.5 4M3.5 7L5.5 9L7.5 7" stroke-width="1.2"/>`, 11, 11)}</button><button class="ic" aria-label="Zoom horizontal">${icon(svg`<path d="M1 1V10M10 1V10M2 5.5H9M4 3.5L2 5.5L4 7.5M7 3.5L9 5.5L7 7.5" stroke-width="1.2"/>`, 11, 11)}</button></div>
                <div class="grp zoom">${icon(svg`<path d="M3 1V9M1 3L3 1L5 3M1 7L3 9L5 7"/>`, 6, 10)}<input class="zv" type="range" value="100" aria-label="Vertical zoom" />${icon(svg`<path d="M1 3H9M3 1L1 3L3 5M7 1L9 3L7 5"/>`, 10, 6)}<input class="zh" type="range" value="38" aria-label="Horizontal zoom" /></div>
              </div>
            </div>
            <div class="field2">
              <div class="head"><button aria-label="Add track">${icon(svg`<path d="M4.5 0.5V8.5M0.5 4.5H8.5"/>`, 9, 9)}</button><button aria-label="Duplicate track">${icon(svg`<path d="M4 10.5H11.5V4" stroke-width="1.5"/><rect x="1" y="1" width="8.5" height="8" fill="#fff" stroke="none"/><path d="M5.2 2.5V7.5M2.7 5H7.7" stroke="#333"/>`, 12, 12)}</button><button class="hide">H</button><div class="push"></div><button aria-label="Track header options">${icon(svg`<rect x="1" y="1" width="9" height="8" rx="1" stroke="#5f9de0"/><path d="M1 2.2H10" stroke="#5f9de0" stroke-width="1.5"/><path d="M4 6.5L5.5 5L7 6.5" stroke="#5f9de0"/>`, 11, 10)}</button></div>
              <div class="arrow">${icon(svg`<path d="M1 1L5 6L1 11Z" stroke="#1f1f1f" fill="#555"/>`, 6, 12)}</div>
              <div class="ruler">${Array.from({ length: 38 }, (_, i) => html`<div class=${classMap({ meas: true, cyc: i < 32 })}><b>${i + 1}</b><i></i></div>`)}</div>
              <div class="rail"></div>
              <div class="thead">
                <svg class="picicon" width="39" height="33" viewBox="0 0 39 33"><path d="M1 0H38V29L39 32H0L1 29Z" fill="#3a3b3a"/><path d="M1 0H38V9H1Z" fill="#4c4e4c"/><path d="M3 3H30M3 6H30" stroke="#7d827d" stroke-width="1.4" stroke-dasharray="2 2"/><path d="M1 10H38" stroke="#0a0a0a" stroke-width="1.4"/><rect x="31" y="2" width="5" height="5" fill="#2c6b38"/><path d="M3.5 11V26M8.5 11V26M13.5 11V26M18.5 11V26M23.5 11V26M28.5 11V26" stroke="#141414" stroke-width="2"/><path d="M3.5 16V19M8.5 20V23M13.5 17V20M18.5 13V16M23.5 16V19M28.5 20V23M33 22V24M36 22V24" stroke="#eee" stroke-width="1.8"/><path d="M0 31H39" stroke="#303030" stroke-width="3"/></svg>
                <div class="tinfo">Simple Stereo Track
                  <div class="tbtns"><button class="pow" aria-label="Track on">${icon(svg`<path d="M3 2.3A3.2 3.2 0 1 0 6 2.3M4.5 0.5V4.5" stroke="#dcebfa"/>`, 9, 9)}</button><div class="two"><button>M</button><button>S</button></div><div class="two"><button class="red-t">R</button><button>I</button></div></div>
                </div>
                <div class="tno">Track 1<i></i></div>
              </div>
              <div class="playhead"></div>
              <div class="arrange"><div class="region" style=${styleMap({ width: `${(893 / 921) * 100}%` })}><span>Simple Stereo Track ${stereoIcon}</span><svg class="wv" viewBox="0 0 893 70" preserveAspectRatio="none"><path d=${waves} stroke="#b38173" stroke-width="1"/></svg></div></div>
              <div class="vbar"><i></i></div>
              <div class="hbar"><i></i></div>
            </div>
          </section>
          <section class="mixer">
            <div class="tools">
              <div class="side">
                <div class="grp back"><button class="ic" aria-label="Back">${backIcon}</button></div>
                <div class="grp">${menu("Edit")}${menu("Options")}${menu("View")}</div>
              </div>
              <div class="tabs"><button>Single</button><button class="sel">Tracks</button><button>All</button></div>
              <div class="side end">
                <div class="tabs filters">${["Audio", "Inst", "Aux", "Bus", "Input", "Output", "Master/VCA", "MIDI"].map((t) => html`<button>${t}</button>`)}</div>
                <div class="tabs view"><button class="sel" aria-label="Narrow strips">${icon(svg`<path d="M1 1.5H10V8.5H1ZM1 2H10M4 2V8M7 2V8"/>`, 11, 10)}</button><button aria-label="Wide strips">${icon(svg`<path d="M1 1.5H10V8.5H1ZM1 2H10M5.5 2V8"/>`, 11, 10)}</button></div>
              </div>
            </div>
            <div class="board">
              <div class="strips">${strips.map((s) => html`<channel-strip .strip=${s}></channel-strip>`)}</div>
              <div class="mscroll"><i></i></div>
            </div>
          </section>
        </main>
      </div>
      <svg class="thumb" width="11" height="10" viewBox="0 0 11 10"><path d="M1 1H10V5L5.5 9.5L1 5Z" fill="#dcdcdb" stroke="#777" stroke-width=".6"/></svg>
      <svg class="pointer" width="9" height="13" viewBox="0 0 9 13"><path d="M.8 .8V10L3 8.2L4.6 12L6.4 11.2L4.9 7.6H8Z" fill="#000" stroke="#ddd" stroke-width=".8"/></svg>
      <div class="mark"><div class="logo">NE</div><div class="word">NonLinear<small>Educating Inc.</small></div></div>
    </div>`;
  }
}
